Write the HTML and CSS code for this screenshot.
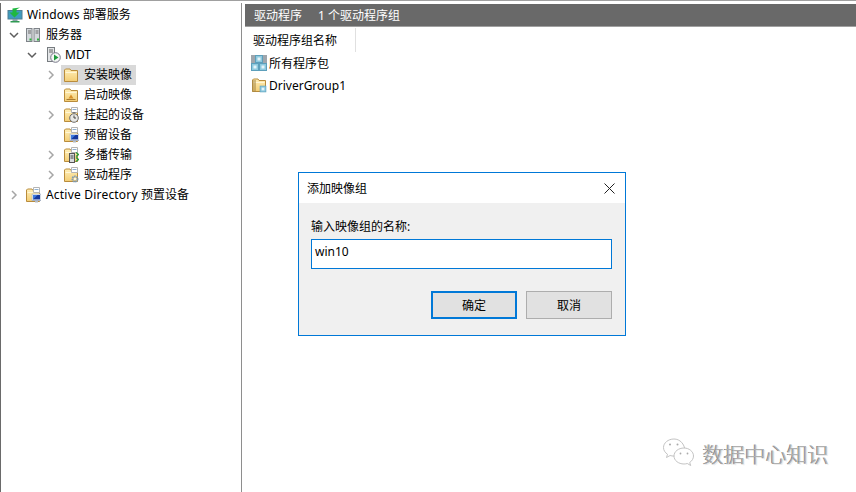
FILE: index.html
```html
<!DOCTYPE html>
<html lang="zh-CN">
<head>
<meta charset="utf-8">
<title>Windows 部署服务</title>
<link rel="stylesheet" href="styles.css">
</head>
<body>
<svg class="defs" width="0" height="0">
  <defs>
    <linearGradient id="fg" x1="0" y1="0" x2="0" y2="1"><stop offset="0" stop-color="#ffefb8"/><stop offset="1" stop-color="#f3cd74"/></linearGradient>
    <symbol id="folder" viewBox="0 0 16 16">
      <path d="M1.500 3V14.500H14.500V3.500H8L7 2H2.500Z" fill="url(#fg)" stroke="#b98c3c"/>
      <path d="M2.500 5.500H13.500" stroke="#fff6d6"/>
    </symbol>
    <symbol id="clip" viewBox="0 0 16 16">
      <path d="M8.500 .5H14.500V5.500H8.500Z" fill="#fff" stroke="#b4b4b4"/>
      <path d="M9.500 2.500H13.500" stroke="#8fb0d0"/>
    </symbol>
    <symbol id="monitor" viewBox="0 0 10 10">
      <rect x=".5" y=".5" width="9" height="6.500" fill="#fff" stroke="#a7b2c4"/>
      <rect x="1.500" y="1.500" width="7" height="4.500" fill="#16389c"/>
      <path d="M1.500 6 6 1.500H1.500Z" fill="#3f7ade"/>
      <rect x="3.500" y="7.500" width="3" height="1.500" fill="#b4bac2"/>
    </symbol>
    <symbol id="cube" viewBox="0 0 8 8">
      <rect x=".5" y=".5" width="7" height="7" fill="#8fcadf" stroke="#5d9fbb"/>
      <rect x="2.500" y="2.500" width="3" height="3" fill="#e4f4f9"/>
    </symbol>
  </defs>
</svg>

<div class="app">
  <aside class="tree">
    <div class="row row-root">
      <svg class="ico" viewBox="0 0 16 16"><rect x="1" y="3.500" width="14" height="8.500" fill="#3f9bbf" stroke="#4f7f94"/><rect x="5.500" y="12" width="5" height="2" fill="#8aa0a8"/><rect x="3.500" y="14" width="9" height="1.500" fill="#2f9a52"/><path d="M13 .5 9.500 2.500V5.500H12.500L7.500 10.500 2.500 5.500H5.500V1.500Z" fill="#1fb83f"/></svg>
      <span class="lbl"><span class="lat">Windows</span> 部署服务</span>
    </div>
    <div class="row ind0">
      <svg class="chev" viewBox="0 0 10 10"><path d="M1 3 5 7 9 3" class="chev-open"/></svg>
      <svg class="ico" viewBox="0 0 16 16"><rect x="1.500" y="1.500" width="5.500" height="13" fill="#d4d8dc" stroke="#7e8388"/><rect x="9" y="1.500" width="5.500" height="13" fill="#d4d8dc" stroke="#7e8388"/><path d="M3 4h3M3 6h3M10.500 4h3M10.500 6h3" stroke="#6c6c6c"/><rect x="4.500" y="11.500" width="2" height="2" fill="#2fb03c"/><rect x="12" y="11.500" width="2" height="2" fill="#2fb03c"/></svg>
      <span class="lbl">服务器</span>
    </div>
    <div class="row ind1">
      <svg class="chev" viewBox="0 0 10 10"><path d="M1 3 5 7 9 3" class="chev-open"/></svg>
      <svg class="ico" viewBox="0 0 16 16"><rect x="1.500" y="0.500" width="7" height="14" fill="#e4e6e8" stroke="#777c80"/><path d="M3 3h4M3 5h4" stroke="#666"/><circle cx="9.500" cy="10.500" r="4.800" fill="#f4f6f4" stroke="#778"/><path d="M8 7.500 12.500 10.500 8 13.500Z" fill="#1e9a3c"/></svg>
      <span class="lbl">MDT</span>
    </div>
    <div class="row ind2">
      <svg class="chev" viewBox="0 0 10 10"><path d="M3 1 7 5 3 9" class="chev-closed"/></svg>
      <div class="item selected">
        <svg class="ico"><use href="#folder"/></svg>
        <span class="lbl">安装映像</span>
      </div>
    </div>
    <div class="row ind2">
      <span class="chev"></span>
      <div class="item">
        <svg class="ico" viewBox="0 0 16 16"><use href="#folder" width="16" height="16"/><path d="M8 7.500 10.500 11.500H5.500Z" fill="#d8912a"/><path d="M3.500 12.500H12.500" stroke="#a87a30"/></svg>
        <span class="lbl">启动映像</span>
      </div>
    </div>
    <div class="row ind2">
      <svg class="chev" viewBox="0 0 10 10"><path d="M3 1 7 5 3 9" class="chev-closed"/></svg>
      <div class="item">
        <svg class="ico" viewBox="0 0 16 16"><use href="#folder" width="16" height="16"/><use href="#clip" width="16" height="16"/><circle cx="11" cy="11" r="4.300" fill="#e8e8e4" stroke="#6a6a6a"/><path d="M11 8.500V11H13" stroke="#444" fill="none"/><path d="M9.500 5.500h3" stroke="#777"/></svg>
        <span class="lbl">挂起的设备</span>
      </div>
    </div>
    <div class="row ind2">
      <span class="chev"></span>
      <div class="item">
        <svg class="ico" viewBox="0 0 16 16"><use href="#folder" width="16" height="16"/><use href="#clip" width="16" height="16"/><use href="#monitor" x="6.500" y="6.500" width="10" height="10"/></svg>
        <span class="lbl">预留设备</span>
      </div>
    </div>
    <div class="row ind2">
      <svg class="chev" viewBox="0 0 10 10"><path d="M3 1 7 5 3 9" class="chev-closed"/></svg>
      <div class="item">
        <svg class="ico" viewBox="0 0 16 16"><use href="#folder" width="16" height="16"/><use href="#clip" width="16" height="16"/><rect x="6.500" y="6.500" width="5" height="9" fill="#d8dadc" stroke="#555"/><path d="M7.500 9h3M7.500 11h3" stroke="#444"/><path d="M13 5.500l2.500 2-2.500 2M13 10.500l2.500 2-2.500 2" fill="none" stroke="#2a9a3a" stroke-width="1.300"/></svg>
        <span class="lbl">多播传输</span>
      </div>
    </div>
    <div class="row ind2">
      <svg class="chev" viewBox="0 0 10 10"><path d="M3 1 7 5 3 9" class="chev-closed"/></svg>
      <div class="item">
        <svg class="ico" viewBox="0 0 16 16"><use href="#folder" width="16" height="16"/><use href="#clip" width="16" height="16"/><circle cx="12" cy="12" r="2.600" fill="none" stroke="#7e9cb8" stroke-width="1.800" stroke-dasharray="1.600 .6"/><circle cx="12" cy="12" r="1" fill="#fff"/></svg>
        <span class="lbl">驱动程序</span>
      </div>
    </div>
    <div class="row ind0">
      <svg class="chev" viewBox="0 0 10 10"><path d="M3 1 7 5 3 9" class="chev-closed"/></svg>
      <svg class="ico" viewBox="0 0 16 16"><use href="#folder" width="16" height="16"/><use href="#clip" width="16" height="16"/><use href="#monitor" x="6.500" y="6.500" width="10" height="10"/></svg>
      <span class="lbl"><span class="lat">Active Directory</span> 预置设备</span>
    </div>
  </aside>

  <main class="pane">
    <header class="pane-head"><span>驱动程序</span><span>1 个驱动程序组</span></header>
    <div class="cols"><div class="col">驱动程序组名称</div></div>
    <div class="list-row">
      <svg class="ico" viewBox="0 0 16 16"><rect width="16" height="16" fill="#a0a6ac"/><use href="#cube" x="4" y="0" width="8" height="8"/><use href="#cube" x="0" y="8" width="8" height="8"/><use href="#cube" x="8" y="8" width="8" height="8"/></svg>
      <span>所有程序包</span>
    </div>
    <div class="list-row">
      <svg class="ico" viewBox="0 0 16 16"><use href="#folder" width="16" height="16"/><rect x="1" y="3" width="4" height="12" fill="#a88a4a" opacity=".55"/><use href="#cube" x="8.500" y="8.500" width="7" height="7"/></svg>
      <span>DriverGroup1</span>
    </div>
  </main>
</div>

<section class="dialog">
  <div class="dlg-title">
    <span>添加映像组</span>
    <svg class="dlg-x" viewBox="0 0 11 11"><path d="M.5.500 10.500 10.500M10.500.500 .5 10.500"/></svg>
  </div>
  <div class="dlg-body">
    <label class="dlg-label">输入映像组的名称:</label>
    <div class="dlg-input">win10</div>
    <div class="dlg-btns">
      <div class="btn btn-default">确定</div>
      <div class="btn">取消</div>
    </div>
  </div>
</section>

<div class="mark">
  <svg class="mark-ico" viewBox="0 0 34 30"><g fill="#fff" stroke="#bcbcbc" stroke-width=".9"><path d="M12 1C6 1 1.500 5 1.500 9.500c0 2.800 1.500 5 4 6.800L4.500 19.500l3.600-2c1.200.4 2.600.6 3.900.6 1 0 2-.2 3-.4C20 17 22 14 23 12.500 22.500 6 18 1 12 1Z"/><path d="M22 10c-5.500 0-10 3.500-10 8s4.500 8 10 8c1.200 0 2.300-.2 3.300-.5l3.400 2-1-3c2.300-1.500 3.800-4 3.800-6.500 0-4.500-4.500-8-9.500-8Z"/></g><g fill="#aaa"><circle cx="8" cy="6.500" r="1"/><circle cx="15.500" cy="6.500" r="1"/><circle cx="18.500" cy="15.500" r=".9"/><circle cx="25.500" cy="15.500" r=".9"/></g></svg>
  <span class="mark-text">数据中心知识</span>
</div>
</body>
</html>
```
FILE: styles.css
```css
* { box-sizing: border-box; }
html, body { margin: 0; padding: 0; }
body {
  width: 856px;
  height: 492px;
  overflow: hidden;
  background: #fff;
  font-family: "Noto Sans", "Noto Sans CJK SC", sans-serif;
  font-size: 12px;
  color: #000;
}
.defs { position: absolute; }
.app {
  display: flex;
  height: 492px;
  padding-top: 2px;
  border-top: 1px solid #a0a0a0;
}
.tree {
  width: 242px;
  flex: none;
  padding-top: 2px;
  border-left: 1px solid #6a6a6a;
  border-right: 1px solid #8e8e8e;
}
.row {
  display: flex;
  align-items: center;
  height: 20px;
}
.row-root { padding-left: 6px; }
.ind0 { padding-left: 8px; }
.ind1 { padding-left: 26px; }
.ind2 { padding-left: 45px; }
.chev {
  width: 10px;
  height: 10px;
  flex: none;
  margin-right: 5px;
}
.ind0 .chev { margin-right: 6px; }
.ind1 .chev { margin-right: 9px; }
.chev path { fill: none; stroke-width: 1.500; }
.chev-open { stroke: #5e5e5e; }
.chev-closed { stroke: #a6a6a6; }
.ico { width: 16px; height: 16px; flex: none; }
.lbl { margin-left: 5px; white-space: nowrap; line-height: 20px; }
.row-root .lbl { margin-left: 4px; }
.ind1 .lbl { margin-left: 3px; }
.lat { letter-spacing: .2px; }
.item {
  display: flex;
  align-items: center;
  height: 20px;
  padding: 0 4px 0 2px;
}
.selected { background: #d9d9d9; }
.pane {
  margin-left: 3px;
  flex: 1;
  min-width: 0;
}
.pane-head {
  display: flex;
  gap: 16px;
  align-items: center;
  height: 23px;
  padding: 0 0 1px 9px;
  margin-top: 1px;
  background: #696969;
  color: #fff;
  border-bottom: 1px solid #a0a0a0;
}
.cols { display: flex; height: 24px; margin-top: 1px; }
.col {
  width: 111px;
  height: 24px;
  padding-left: 8px;
  line-height: 26px;
  border-right: 1px solid #e0e0e0;
}
.list-row {
  display: flex;
  align-items: center;
  height: 22px;
  padding-left: 6px;
  gap: 2px;
}
.dialog {
  position: absolute;
  left: 298px;
  top: 172px;
  width: 328px;
  height: 164px;
  background: #f0f0f0;
  border: 1px solid #0078d7;
}
.dlg-title {
  display: flex;
  justify-content: space-between;
  align-items: center;
  height: 30px;
  padding: 0 10px 0 8px;
  background: #fff;
}
.dlg-x { width: 11px; height: 11px; }
.dlg-x path { stroke: #222; stroke-width: 1; fill: none; }
.dlg-body { padding: 15px 13px 0 12px; }
.dlg-label { display: block; line-height: 17px; }
.dlg-input {
  height: 30px;
  margin-top: 4px;
  padding-left: 3px;
  background: #fff;
  border: 1px solid #0078d7;
  line-height: 23px;
  font-size: 12px;
}
.dlg-btns {
  display: flex;
  justify-content: flex-end;
  gap: 9px;
  margin-top: 22px;
}
.btn {
  width: 86px;
  height: 28px;
  display: flex;
  align-items: center;
  justify-content: center;
  background: #e1e1e1;
  border: 1px solid #adadad;
}
.btn-default { border: 2px solid #0078d7; }
.mark {
  position: absolute;
  left: 662px;
  top: 438px;
  display: flex;
  align-items: center;
  gap: 7px;
}
.mark-ico { width: 34px; height: 30px; }
.mark-text {
  font-size: 21px;
  color: #b0b0b0;
  text-shadow: -1px 0 0 #808080, 1px 1px 0 #ececec;
  font-weight: 300;
}
```
